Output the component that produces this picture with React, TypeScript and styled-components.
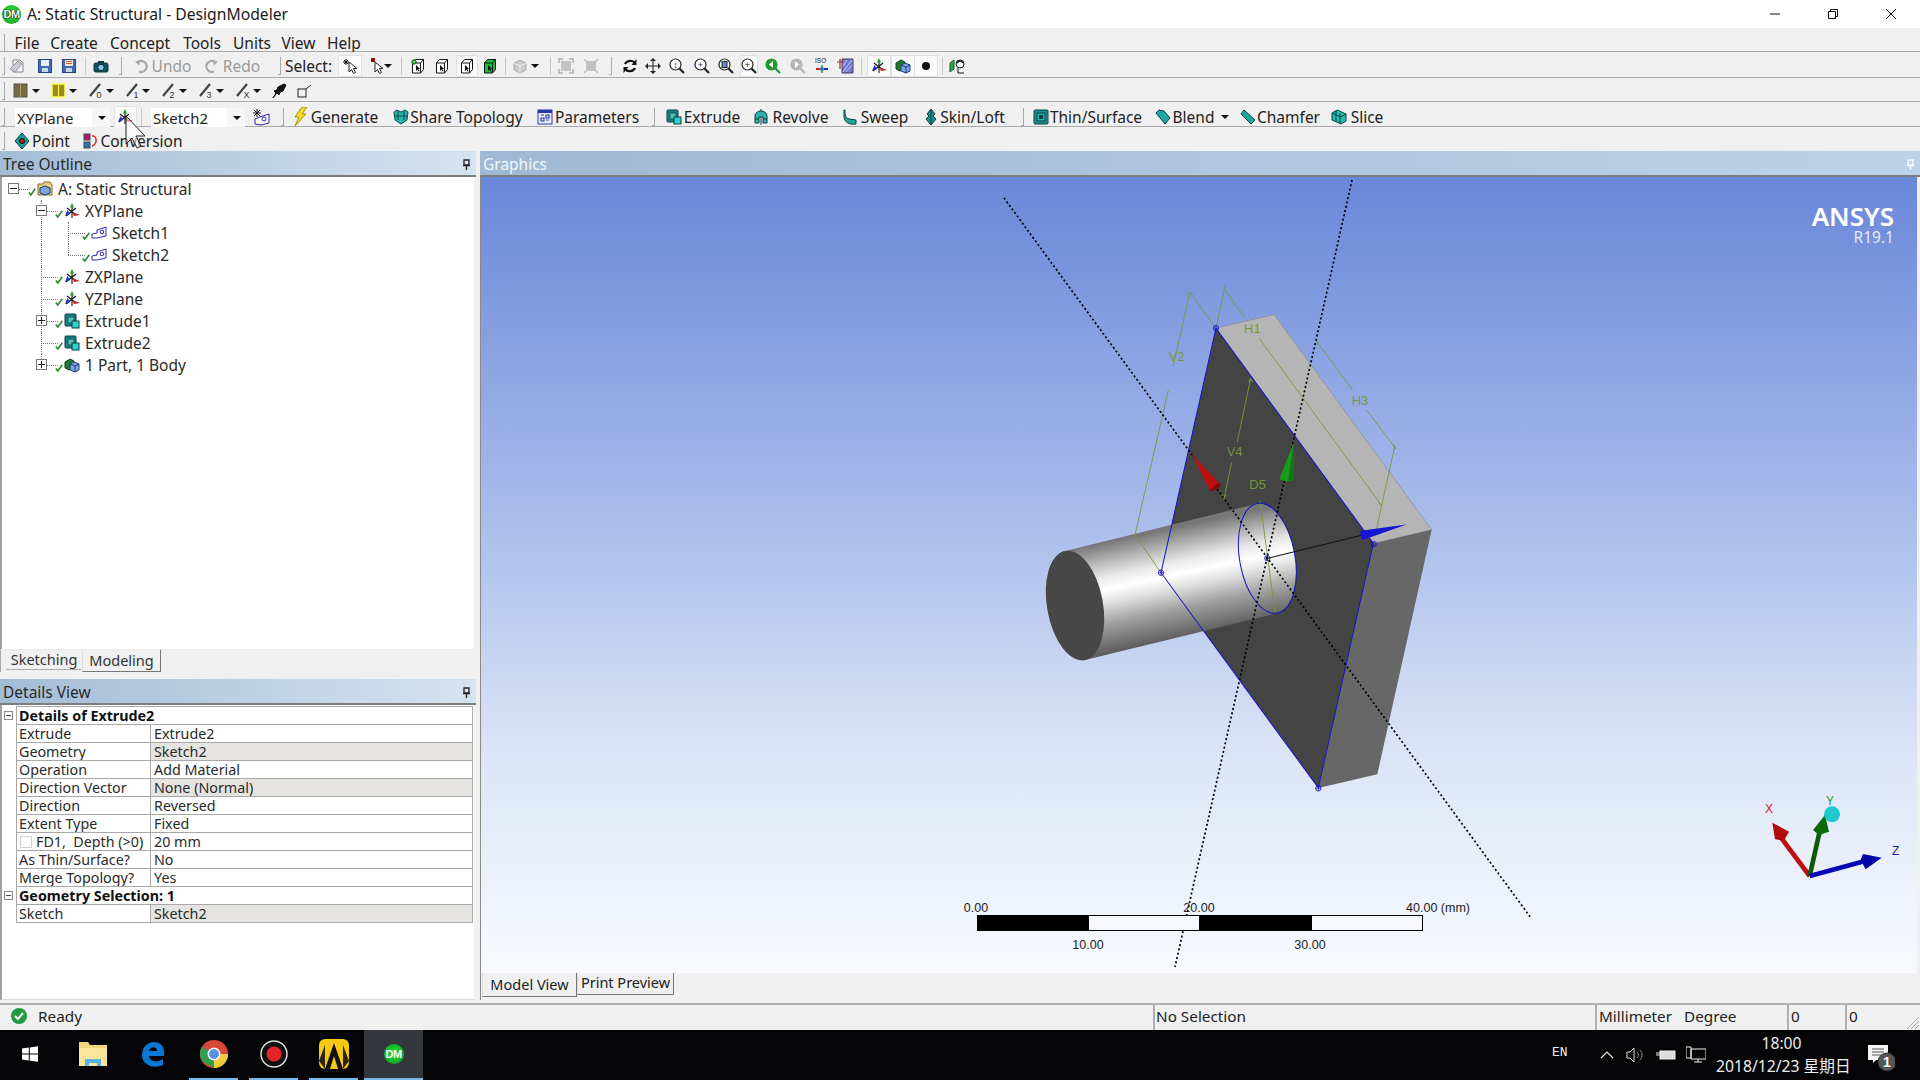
import React from 'react';
import styled, { createGlobalStyle } from 'styled-components';

const Global = createGlobalStyle`
  html, body { margin: 0; padding: 0; background: #f0f0f0; }
  * { box-sizing: border-box; }
`;
const FONT = `"Noto Sans", "Noto Sans CJK SC", sans-serif`;

const Page = styled.div`
  width: 1920px; height: 1080px; overflow: hidden; position: relative;
  display: flex; flex-direction: column; background: #f0f0f0;
  font-family: ${FONT}; font-size: 14.5px; color: #222;
`;
const TitleBar = styled.div`
  height: 28px; background: #fff; display: flex; align-items: center; flex: none;
`;
const TitleLogo = styled.div`
  width: 19px; height: 19px; margin-left: 2px; border-radius: 50%; flex: none;
  background: radial-gradient(circle at 50% 40%, #3fe23f, #0c9a1c);
  color: #fff; font: bold 11px/19px "Liberation Sans", sans-serif; text-align: center;
  text-shadow: 0 0 1px #000, 0 0 1px #000, 0 0 1px #000; letter-spacing: -0.5px;
`;
const TitleText = styled.div`
  margin-left: 6px; font-size: 15.7px; color: #1a1a1a; flex: 1; white-space: nowrap;
`;
const WinBtn = styled.div`
  width: 58px; height: 28px; display: flex; align-items: center; justify-content: center; flex: none;
`;
const Band = styled.div<{ $h: number; $line?: boolean; $top?: number }>`
  height: ${p => p.$h}px; flex: none; display: flex; align-items: center;
  padding-top: ${p => p.$top ?? 0}px;
  border-bottom: ${p => (p.$line === false ? 'none' : '1px solid #aaa')};
  background: #f0f0f0;
`;
const Slot = styled.div<{ $ml: number; $w: number }>`
  margin-left: ${p => p.$ml}px; width: ${p => p.$w}px; flex: none; display: flex;
  align-items: center; justify-content: center; white-space: nowrap; height: 100%;
`;
const Label = styled.span<{ $muted?: boolean }>`
  font-size: 15.5px; line-height: 1; padding-top: 2px; color: ${p => (p.$muted ? '#9a9a9a' : '#222')};
`;
const Grip = styled.div`
  width: 3px; height: 18px; border-right: 1px solid #a8a8a8; border-bottom: 1px solid #a8a8a8;
`;
const Sep = styled.div`
  width: 1px; height: 18px; background: #c8c8c8;
`;
const Pressed = styled.div`
  width: 100%; height: 22px; background: #fafafa; border: 1px solid #e2e2e2;
  display: flex; align-items: center; justify-content: center;
`;
const Combo = styled.div`
  width: 100%; height: 20px; margin-top: 2px; background: linear-gradient(90deg, #fff 81%, #f6f6f6 81%);
  display: flex; align-items: center; justify-content: space-between; padding: 0 4px 0 2px;
  font-size: 15px;
`;
const Caret = styled.span`
  width: 0; height: 0; border-left: 4px solid transparent; border-right: 4px solid transparent;
  border-top: 4px solid #111; display: inline-block; flex: none;
`;
const Main = styled.div`
  flex: none; height: 852px; display: flex;
`;
const LeftCol = styled.div`
  width: 476px; flex: none; display: flex; flex-direction: column;
`;
const PanelHead = styled.div`
  height: 26px; flex: none; display: flex; align-items: center; justify-content: space-between;
  padding: 2px 5px 0 3px; border-bottom: 2px solid #7d7d7d; font-size: 15.5px; color: #2a2a2a;
  background: linear-gradient(90deg, #a3bcd6, #d6e3f0);
`;
const GraphicsHead = styled(PanelHead)`
  background: linear-gradient(90deg, #9fb9d4, #bcd2e8); color: #f2f6fa;
`;
const TreeBody = styled.div`
  height: 472px; flex: none; background: #fff; border-left: 2px solid #a0a0a0;
  margin-right: 2px; padding-top: 1px;
`;
const TreeRow = styled.div`
  height: 22px; display: flex; align-items: center; margin-left: -2px; font-size: 15.5px; color: #2a2a2a;
`;
const Conn = styled.div<{ $w: number; $v?: 'full' | 'top'; $h?: boolean }>`
  width: ${p => p.$w}px; height: 22px; flex: none; position: relative;
  &::before {
    content: ${p => (p.$v ? '""' : 'none')}; position: absolute; left: ${p => p.$w === 28 ? 14 : 13}px; top: 0;
    height: ${p => (p.$v === 'top' ? 11 : 22)}px; border-left: 1px dotted #777;
  }
  &::after {
    content: ${p => (p.$h ? '""' : 'none')}; position: absolute; left: ${p => p.$w === 28 ? 14 : 13}px; top: 11px;
    width: ${p => p.$w === 28 ? 14 : 17}px; border-top: 1px dotted #777;
  }
`;
const PlusBox = styled.span`
  position: absolute; z-index: 1; left: 50%; top: 5px; margin-left: -6px; width: 11px; height: 11px;
  border: 1px solid #777; background: #fff; display: flex; align-items: center; justify-content: center;
`;
const Check = styled.span`
  width: 8px; flex: none; display: flex; margin-top: 6px;
`;
const TreeIcon = styled.span`
  width: 16px; height: 16px; flex: none; margin: 0 5px 0 1px; display: flex;
`;
const TabStrip = styled.div`
  height: 23px; flex: none; display: flex; align-items: flex-start; padding-left: 5px;
  border-left: 1px solid #a8a8a8; margin-right: 2px; border-top: 1px solid #e8e8e8;
`;
const Tab = styled.div<{ $on?: boolean; $w: number }>`
  width: ${p => p.$w}px; height: ${p => (p.$on ? 22 : 20)}px; margin-top: 0;
  display: flex; align-items: ${p => (p.$on ? 'flex-end' : 'center')}; justify-content: center;
  padding-bottom: ${p => (p.$on ? 1 : 2)}px; font-size: 14.5px; color: #333;
  border-bottom: 1px solid ${p => (p.$on ? '#777' : '#aaa')};
  border-right: 1px solid ${p => (p.$on ? '#777' : 'transparent')};
  border-left: 1px solid ${p => (p.$on ? '#ddd' : 'transparent')};
`;
const Spacer7 = styled.div`
  height: 7px; flex: none;
`;
const DetailsBody = styled.div`
  flex: 1; background: #fff; margin: 0 2px 3px 0; border-left: 2px solid #a0a0a0; padding-top: 1px;
  border-bottom: 1px solid #ddd;
`;
const DRow = styled.div`
  height: 18px; display: flex; font-size: 14.3px; line-height: 17px; color: #2a2a2a; position: relative;
`;
const Gutter = styled.div`
  width: 14px; flex: none; display: flex; align-items: center; justify-content: center; padding-right: 2px;
`;
const MiniBox = styled.span`
  width: 9px; height: 9px; border: 1px solid #888; display: flex; align-items: center; justify-content: center;
  &::after { content: ""; width: 5px; height: 1px; background: #444; }
`;
const Head = styled.div`
  flex: 1; border: 1px solid #a8a8a8; border-bottom: none; font-weight: 700; padding-left: 2px;
  color: #111; font-size: 14.3px; margin-right: 1px;
`;
const KeyCell = styled.div`
  width: 134px; flex: none; border-left: 1px solid #a8a8a8; border-top: 1px solid #a8a8a8;
  padding-left: 2px; white-space: nowrap; display: flex; align-items: center;
`;
const ValCell = styled.div<{ $gray?: boolean }>`
  flex: 1; margin-right: 1px; border-left: 1px solid #a8a8a8; border-top: 1px solid #a8a8a8;
  border-right: 1px solid #a8a8a8;
  padding-left: 3px; background: ${p => (p.$gray ? '#e6e4e0' : '#fff')}; display: flex; align-items: center;
`;
const TableEnd = styled.div`
  height: 1px; margin: 0 1px 0 14px; background: #a8a8a8;
`;
const CheckBox = styled.span`
  width: 12px; height: 12px; border: 1px solid #d0d0d0; margin: 0 4px 0 1px; flex: none;
`;
const Splitter = styled.div`
  width: 4px; flex: none; background: #f0f0f0;
`;
const RightCol = styled.div`
  flex: 1; display: flex; flex-direction: column; min-width: 0;
`;
const CanvasWrap = styled.div`
  height: 796px; flex: none; margin-right: 3px; border-left: 1px solid #8a8a8a; 
  background: linear-gradient(180deg, #6a87d9 0%, #a4b9ea 40%, #dbe4f6 72%, #f8fafe 100%);
  svg { display: block; }
`;
const RightTabs = styled.div`
  height: 27px; flex: none; display: flex; align-items: flex-start; padding-left: 1px;
  border-left: 1px solid #8a8a8a;
`;
const GTab = styled.div<{ $on?: boolean; $w: number }>`
  width: ${p => p.$w}px; height: ${p => (p.$on ? 24 : 22)}px; font-size: 14.5px; color: #222;
  display: flex; align-items: ${p => (p.$on ? 'flex-end' : 'center')}; justify-content: center;
  padding-bottom: ${p => (p.$on ? 2 : 3)}px;
  background: #f0f0f0; border-bottom: 1px solid #777; border-right: 1px solid #777;
  border-left: 1px solid #ddd;
`;
const Status = styled.div`
  height: 27px; flex: none; display: flex; align-items: center; border-top: 2px solid #b0b0b0; font-size: 15.3px; color: #222;
  position: relative;
`;
const StatusPane = styled.div<{ $w: number; $edge?: boolean; $pad?: number }>`
  width: ${p => p.$w}px; flex: none; height: 25px; display: flex; align-items: center;
  padding-left: ${p => p.$pad ?? 2}px; padding-bottom: 3px; white-space: nowrap;
  border-left: ${p => (p.$edge ? '2px solid #b0b0b0' : 'none')};
`;
const Resize = styled.div`
  flex: 1; display: flex; justify-content: flex-end; align-items: flex-end; height: 25px;
`;
const Taskbar = styled.div`
  height: 50px; flex: none; background: #050507; display: flex; align-items: center; position: relative; color: #eee;
`;
const TaskSlot = styled.div<{ $ml: number; $w: number; $active?: boolean; $run?: boolean }>`
  margin-left: ${p => p.$ml}px; width: ${p => p.$w}px; height: 50px; flex: none;
  display: flex; align-items: center; justify-content: center;
  background: ${p => (p.$active ? '#34373b' : 'transparent')};
  border-bottom: 2px solid ${p => (p.$run ? '#76b9ed' : 'transparent')};
`;
const DmBadge = styled.div`
  width: 20px; height: 20px; border-radius: 50%; background: radial-gradient(circle at 50% 45%, #1fdc35, #0a9b20);
  color: #fff; font: bold 11px/20px "Liberation Sans", sans-serif; text-align: center; letter-spacing: -0.5px;
`;
const EnText = styled.div<{ $ml: number }>`
  margin-left: ${p => p.$ml}px; font: 13px "Liberation Mono", monospace; flex: none; width: 15px; color: #eee; margin-top: -6px;
`;
const Clock = styled.div`
  margin-left: 10px; width: 131px; flex: none; text-align: center; color: #eee; font-size: 15.7px; line-height: 23px;
  white-space: nowrap;
`;
const Cursor = styled.svg`
  position: absolute; left: 125px; top: 115px; z-index: 5;
`;

/* ---------- icons ---------- */
type SvgP = { w?: number; h?: number; children: React.ReactNode };
const S = ({ w = 16, h = 16, children }: SvgP) => (
  <svg width={w} height={h} viewBox={`0 0 ${w} ${h}`} fill="none" style={{ display: 'block', flex: 'none' }}>{children}</svg>
);
const NewDoc = () => <S><path d="M4 2h7l3 3v9H4z" fill="#f4f4f4" stroke="#888" /><path d="M1 11L9 3l4 3-7 8z" fill="#c9c9d8" stroke="#999" /></S>;
const Floppy = ({ red }: { red?: boolean }) => <S><rect x="1.5" y="1.5" width="13" height="13" fill="#3f6bb5" stroke="#27457e" /><rect x="4" y="2" width="8" height="6" fill={red ? '#f2e0c8' : '#e8eefc'} />{red && <path d="M5 3.5h6M5 5.5h6" stroke="#d4622a" />}<rect x="5" y="10" width="6" height="4" fill="#c7d4ea" /></S>;
const Camera = () => <S w={18}><rect x="2" y="5" width="14" height="9" rx="1.5" fill="#12505a" stroke="#0d3b44" /><rect x="6" y="3" width="6" height="2" fill="#0d3b44" /><circle cx="9" cy="9.5" r="3.2" fill="#7fc8f5" stroke="#052a30" /></S>;
const Undo = ({ flip }: { flip?: boolean }) => <S><g transform={flip ? 'translate(16 0) scale(-1 1)' : undefined}><path d="M5 4a5.5 5.5 0 1 1 1 9.5" stroke="#a8a8a8" strokeWidth="2.2" /><path d="M2 3.5l5-1-1 5z" fill="#a8a8a8" /></g></S>;
const SelPoint = () => <S w={20} h={18}><path d="M3 5h6M6 2v6M4 3l4 4M8 3L4 7" stroke="#111" /><path d="M9 5v10l2.5-2.5 2 4 2-1-2-4H17z" fill="#fff" stroke="#222" /></S>;
const SelEdge = () => <S w={13} h={18}><rect x="0" y="1" width="4" height="4" fill="#8a1010" /><path d="M4 5v10l2.5-2.5 2 4 2-1-2-4H12z" fill="#fff" stroke="#222" /></S>;
const BoxSel = ({ fill, face }: { fill: string; face?: boolean }) => <S><path d="M2.5 5l3-3.5h8v10l-3 3.5h-8z" fill={fill} stroke="#111" /><path d="M2.5 5h8v10M10.5 5l3-3.5" stroke="#111" />{face && <circle cx="4" cy="4" r="2.2" fill="#4bcf4b" stroke="#0a5a0a" />}<path d="M6 7v6l1.4-1.4 1 2 1-.5-1-2H10z" fill="#111" /></S>;
const GrayCube = () => <S><path d="M2 5l6-3 6 3v7l-6 3-6-3z" fill="#c9c9c9" stroke="#aaa" /><path d="M2 5l6 3 6-3M8 8v7" stroke="#eee" /></S>;
const Frame = ({ x }: { x?: boolean }) => <S><rect x="3" y="3" width="10" height="10" fill="#c5c5c5" />{x ? <path d="M1 1l14 14M15 1L1 15" stroke="#bdbdbd" strokeWidth="1.5" /> : <path d="M1 5V1h4M11 1h4v4M15 11v4h-4M5 15H1v-4" stroke="#b0b0b0" strokeWidth="1.5" />}</S>;
const Rotate = () => <S><path d="M13 5A6 6 0 0 0 3 6" stroke="#111" strokeWidth="2.2" /><path d="M3 11a6 6 0 0 0 10-1" stroke="#111" strokeWidth="2.2" /><path d="M14.5 1v6h-5z M1.5 15V9h5z" fill="#111" /></S>;
const Pan = () => <S><path d="M8 1v14M1 8h14" stroke="#222" /><path d="M8 0l3 3H5zM8 16l3-3H5zM0 8l3-3v6zM16 8l-3-3v6z" fill="#222" /></S>;
const Zoom = ({ inner, ring = '#222', fill = '#fff' }: { inner?: React.ReactNode; ring?: string; fill?: string }) => <S><circle cx="6.5" cy="6.5" r="5.5" fill={fill} stroke={ring} strokeWidth="1.2" /><path d="M10.5 10.5L15 15" stroke={ring} strokeWidth="2.2" />{inner}</S>;
const Iso = () => <S w={18} h={18}><text x="2" y="6" fontSize="6.5" fontFamily="Liberation Sans" fill="#222">ISO</text><path d="M9 8v8" stroke="#2b9a2b" strokeWidth="1.5" /><path d="M3 12h4" stroke="#c22" strokeWidth="2" /><path d="M11 12h4" stroke="#22c" strokeWidth="2" /><circle cx="9" cy="12" r="2" fill="#2b7ab5" /></S>;
const PlaneIcon = () => <S w={18} h={18}><path d="M5 2h11v14H5z" fill="#6d78d8" stroke="#444" /><path d="M6 15L15 3M9 15l6-7M6 9l4-6" stroke="#c4c8f0" /><path d="M3 2v10M0 5h6" stroke="#b02020" strokeWidth="1.2" /></S>;
const Triad = () => <S><path d="M8 3v12M2 13L12 5M3 5l9 7" stroke="#111" strokeWidth="1.1" /><path d="M8 0L5.8 4.5h4.4z" fill="#27a12b" /><path d="M16 12l-6.5-2.5v3.5z" fill="#c81f1f" /><path d="M1 13l2.5-6 2.5 4z" fill="#2030c8" /></S>;
const Cube3 = () => <S><path d="M1 5l5-3 4 2v7l-5 2-4-2z" fill="#1e7b32" stroke="#0c4216" /><path d="M6 7l4-2 5 2v6l-4 2-5-2z" fill="#7ea6e0" stroke="#1f3a7a" /><path d="M6 7l5 2 4-2M11 9v6" stroke="#1f3a7a" /></S>;
const Dot = () => <S w={10} h={10}><circle cx="5" cy="5" r="4" fill="#111" /></S>;
const Person = () => <S w={18}><path d="M1 5l4-3v9l-4 3z" fill="#28a745" stroke="#116624" /><circle cx="11" cy="6" r="4" fill="#fff" stroke="#111" /><path d="M8 5c2-3 5-2 6 0" stroke="#111" strokeWidth="1.5" /><path d="M9 10v5h6" stroke="#111" /></S>;
const Brown = ({ yellow }: { yellow?: boolean }) => <S w={15} h={15}><rect x="1" y="1" width="13" height="13" fill={yellow ? '#9a8a20' : '#7b6a3c'} stroke={yellow ? '#ffff50' : '#555'} strokeWidth={yellow ? 1.5 : 1} /><path d="M7.5 1v13" stroke={yellow ? '#ffff50' : '#a89a70'} /></S>;
const SelNum = ({ n }: { n: string }) => <S w={15} h={18}><path d="M1 14L11 2" stroke="#444" strokeWidth="2.2" /><text x="7.5" y="16" fontSize="9" fontFamily="Liberation Sans" fill="#333">{n}</text></S>;
const Pin = () => <S><path d="M14 2l-3 6-3 1-1 3-2-2-4 5 3-5-2-2 3-1 1-3 6-3z" fill="#111" stroke="#111" /></S>;
const SqLine = () => <S><rect x="2" y="6" width="8" height="8" stroke="#222" /><path d="M10 6l5-4" stroke="#222" /></S>;
const NewSketch = () => <S w={18} h={18}><path d="M2 2l6 6M8 2L2 8M1 5h8M5 1v8" stroke="#111" /><path d="M3 16V11l5-2 9-3v9L9 17z" fill="#fff" stroke="#2727b5" /><circle cx="12" cy="11" r="2" stroke="#2727b5" /></S>;
const Bolt = () => <S w={14} h={20}><path d="M8 0h5L8 7h4L1 19l4-9H1z" fill="#f3e21a" stroke="#a28f0a" /></S>;
const Share = () => <S><path d="M1 3l3-2 4 2 4-2 3 2-1 8-6 4-6-4z" fill="#27b3ad" stroke="#0d4f4c" /><path d="M5 2v9M11 2v9M2 7h12" stroke="#0d4f4c" /></S>;
const Params = () => <S><rect x="1" y="1" width="14" height="14" fill="#eef" stroke="#2338a8" /><rect x="1" y="1" width="14" height="3" fill="#2338a8" /><path d="M4 6h3M4 9h3v3H4zM9 6h3v3H9zM9 11h3" stroke="#2338a8" strokeWidth="1.2" /></S>;
const Extrude = () => <S><rect x="1" y="1" width="11" height="12" rx="1" fill="#1a7f80" stroke="#0b3f40" /><rect x="4" y="4" width="6" height="6" fill="#9fe" opacity=".5" stroke="#0b3f40" /><rect x="8" y="8" width="7" height="7" fill="#31d0cf" stroke="#0b3f40" /></S>;
const Revolve = () => <S><path d="M8 0v16" stroke="#0b3f40" /><path d="M2 7c0-3 3-5 6-5s6 2 6 5v7h-4V8H6v6H2z" fill="#2db3ad" stroke="#0b3f40" /><path d="M2 10h4M10 10h4" stroke="#0b3f40" /></S>;
const Sweep = () => <S><path d="M3 1c0 5 0 8 4 9l7 1v4c-7 1-12-2-12-8V1z" fill="#21a8a3" stroke="#0b3f40" /></S>;
const Skin = () => <S><path d="M8 0l4 5-2 2 3 3-5 6-5-6 3-3-2-2z" fill="#1c8f8c" stroke="#0b3f40" /><path d="M8 0v16" stroke="#0b3f40" /></S>;
const Thin = () => <S><rect x="1" y="1" width="14" height="14" rx="1" fill="#1a8f8f" stroke="#0b3f40" /><rect x="4" y="4" width="8" height="8" fill="#2db3ad" stroke="#0b3f40" /><rect x="6" y="6" width="4" height="4" fill="#0b3f40" /></S>;
const Blend = () => <S><path d="M1 4l3-3 5 1 6 7-5 6z" fill="#1fa7a2" stroke="#0b3f40" /></S>;
const Chamfer = () => <S><path d="M1 5l3-4 11 10-4 4z" fill="#1fa7a2" stroke="#0b3f40" /></S>;
const Slice = () => <S><path d="M1 4l5-3 9 4v7l-5 3-9-4z" fill="#29bdb7" stroke="#0b3f40" /><path d="M5 2v10M9 4v10M1 4l9 4 5-3" stroke="#0b3f40" /></S>;
const PointI = () => <S><path d="M8 0l7 8-7 8-7-8z" fill="#1d9b97" stroke="#0b3f40" /><circle cx="8" cy="8" r="2.5" fill="#b02020" stroke="#111" /></S>;
const Conv = () => <S><rect x="1" y="1" width="6" height="6" fill="#b01a6a" stroke="#444" /><rect x="1" y="9" width="6" height="6" fill="#2a74b5" stroke="#444" /><path d="M9 3c5-1 6 8 0 10" stroke="#d02020" strokeWidth="1.4" /></S>;
const PinIcon = ({ c = '#222' }: { c?: string }) => <S w={9} h={11}><path d="M2 1h5v5H2zM1 6.5h7M4.5 7v4" stroke={c} strokeWidth="1.3" /></S>;
const CheckMark = () => <S w={8} h={8}><path d="M.8 4.5L2.8 7 7.3 .8" stroke="#2b8a2b" strokeWidth="1.6" /></S>;
const SketchTree = () => <S><path d="M1 13V9l5-1V5l9-3v9l-9 2z" fill="#fff" stroke="#2b2bb5" /><circle cx="11" cy="7" r="1.8" stroke="#2b2bb5" /></S>;
const RootIcon = () => <S><path d="M1 3h5l1-2h6l2 3v10H1z" fill="#e9cf7c" stroke="#7a6a2a" /><path d="M8 5l5 2v5l-5 2-5-2V7z" fill="#7ea6e0" stroke="#1f3a7a" /></S>;

type It = { x: number; w: number; n: React.ReactNode };
const Flow = ({ items }: { items: It[] }) => {
  let pos = 0;
  return <>{items.map((it, i) => {
    const ml = it.x - pos;
    pos = it.x + it.w;
    return <Slot key={i} $ml={ml} $w={it.w}>{it.n}</Slot>;
  })}</>;
};
const C = (x: number, n: React.ReactNode, w = 16): It => ({ x: x - w / 2, w, n });
const T = (x: number, r: number, s: string, muted?: boolean): It => ({ x, w: r - x, n: <Label $muted={muted}>{s}</Label> });
const G = (x: number): It => ({ x, w: 3, n: <Grip /> });
const V = (x: number): It => ({ x, w: 1, n: <Sep /> });
const K = (x: number): It => ({ x: x - 4, w: 8, n: <Caret /> });
const Z = (s: string, col = '#222') => <text x="6.5" y="9.5" fontSize="9" fontFamily="Liberation Sans" textAnchor="middle" fill={col}>{s}</text>;

const row2: It[] = [
  G(2), C(17, <NewDoc />), C(45, <Floppy />), C(69, <Floppy red />), V(85), C(101, <Camera />, 18), G(119),
  C(141, <Undo />), T(153, 190, 'Undo', true), C(212, <Undo flip />), T(222, 261, 'Redo', true), G(278),
  T(284, 333, 'Select:'), C(350, <Pressed><SelPoint /></Pressed>, 24), C(377, <SelEdge />, 13), K(388), V(401),
  C(418, <BoxSel fill="#fff" face />), C(442, <BoxSel fill="#fff" />), C(467, <Pressed><BoxSel fill="#fff" /></Pressed>, 22), C(490, <BoxSel fill="#16c23a" />), V(505),
  C(520, <GrayCube />), K(535), V(550), C(566, <Frame />), C(591, <Frame x />), G(609), C(630, <Rotate />),
  C(653, <Pan />), C(677, <Zoom inner={Z('↕')} />), C(702, <Zoom inner={Z('+')} />), C(726, <Zoom inner={<rect x="4" y="3.5" width="5" height="6" fill="#6c8cd0" stroke="#222" />} />),
  C(749, <Pressed><Zoom inner={Z('+')} /></Pressed>, 18), C(773, <Zoom ring="#1f9a30" fill="#1f9a30" inner={<path d="M8 3L4 6.5 8 10z" fill="#fff" />} />), C(798, <Zoom ring="#b5b5b5" fill="#b5b5b5" inner={<path d="M5 3l4 3.5-4 3.5z" fill="#fff" />} />),
  C(822, <Iso />, 18), C(846, <PlaneIcon />, 18), V(861), C(879, <Pressed><Triad /></Pressed>, 24), C(903, <Pressed><Cube3 /></Pressed>, 24), C(926, <Pressed><Dot /></Pressed>, 24), V(942), C(958, <Person />, 18),
];
const row3: It[] = [
  G(2), C(20, <Brown />, 15), K(36), C(58, <Brown yellow />, 15), K(73),
  C(96, <SelNum n="0" />, 15), K(110), C(133, <SelNum n="1" />, 15), K(146), C(169, <SelNum n="2" />, 15), K(183),
  C(206, <SelNum n="3" />, 15), K(220), C(243, <SelNum n="X" />, 15), K(257), C(280, <Pin />), C(304, <SqLine />),
];
const row4: It[] = [
  G(2), { x: 15, w: 95, n: <Combo>XYPlane<Caret /></Combo> }, C(125, <Pressed><Triad /></Pressed>, 23), V(141),
  { x: 151, w: 94, n: <Combo>Sketch2<Caret /></Combo> }, C(261, <NewSketch />, 18), G(281),
  C(301, <Bolt />, 14), T(311, 378, 'Generate'), C(401, <Share />), T(409, 524, 'Share Topology'), C(545, <Params />), T(557, 637, 'Parameters'),
  G(652), C(674, <Extrude />), T(684, 740, 'Extrude'), C(761, <Revolve />), T(772, 829, 'Revolve'), C(850, <Sweep />), T(860, 909, 'Sweep'), C(931, <Skin />), T(940, 1005, 'Skin/Loft'),
  G(1021), C(1041, <Thin />), T(1051, 1141, 'Thin/Surface'), C(1163, <Blend />), T(1173, 1214, 'Blend'), K(1225), C(1248, <Chamfer />), T(1258, 1319, 'Chamfer'), C(1339, <Slice />), T(1350, 1384, 'Slice'),
];
const row5: It[] = [G(2), C(22, <PointI />), T(33, 69, 'Point'), C(91, <Conv />), T(101, 182, 'Conversion')];

type TR = { lvl: number; box?: '-' | '+'; icon: React.ReactNode; t: string; last?: boolean; lastSub?: boolean };
const BoxGlyph = ({ k }: { k: '-' | '+' }) => <S w={9} h={9}><path d={k === '+' ? 'M1 4.5h7M4.5 1v7' : 'M1 4.5h7'} stroke="#222" /></S>;
const tree: TR[] = [
  { lvl: 0, box: '-', icon: <RootIcon />, t: 'A: Static Structural' },
  { lvl: 1, box: '-', icon: <Triad />, t: 'XYPlane' },
  { lvl: 2, icon: <SketchTree />, t: 'Sketch1' },
  { lvl: 2, icon: <SketchTree />, t: 'Sketch2', lastSub: true },
  { lvl: 1, icon: <Triad />, t: 'ZXPlane' },
  { lvl: 1, icon: <Triad />, t: 'YZPlane' },
  { lvl: 1, box: '+', icon: <Extrude />, t: 'Extrude1' },
  { lvl: 1, icon: <Extrude />, t: 'Extrude2' },
  { lvl: 1, box: '+', icon: <Cube3 />, t: '1 Part, 1 Body', last: true },
];
const TreeLine = ({ r }: { r: TR }) => (
  <TreeRow>
    {r.lvl === 0 && <Conn $w={28} $h><PlusBox><BoxGlyph k={r.box!} /></PlusBox></Conn>}
    {r.lvl === 1 && <><Conn $w={28} /><Conn $w={27} $v={r.last ? 'top' : 'full'} $h>{r.box && <PlusBox><BoxGlyph k={r.box} /></PlusBox>}</Conn></>}
    {r.lvl === 2 && <><Conn $w={28} /><Conn $w={27} $v="full" /><Conn $w={27} $v={r.lastSub ? 'top' : 'full'} $h /></>}
    <Check><CheckMark /></Check>
    <TreeIcon>{r.icon}</TreeIcon>
    {r.t}
  </TreeRow>
);

const rows: [string, string, boolean?][] = [
  ['Extrude', 'Extrude2'], ['Geometry', 'Sketch2', true], ['Operation', 'Add Material'], ['Direction Vector', 'None (Normal)', true],
  ['Direction', 'Reversed'], ['Extent Type', 'Fixed'],
];
const rowsB: [string, string][] = [['As Thin/Surface?', 'No'], ['Merge Topology?', 'Yes']];

const OL = '#76983a';
const MODEL_T = 'translate(1001 280) scale(.33333 .34435)';
const Model = () => (
  <g transform={MODEL_T}>
    <path d="M648 140L822 100L1295 725L1120 765z" fill="#b5b5b5" stroke="#888" strokeWidth="2" />
    <path d="M1120 765L1295 725L1132 1435L955 1475z" fill="#676767" />
    <path d="M648 140L1120 765L955 1475L483 850z" fill="#444" />
    <path d="M193 788L770 650A83 158 -10.7 0 1 830 968L258 1103A83 158 -10.7 0 1 193 788z" fill="url(#cyl)" />
    <ellipse cx="225" cy="945" rx="84" ry="161" transform="rotate(-10.7 225 945)" fill="#474747" />
    <g stroke={OL} strokeWidth="2.6" fill="none">
      <path d="M570 35L648 140M570 35L520 250M505 320L405 740L483 850" />
      <path d="M676 15L650 130M676 30L735 110" />
      <path d="M778 170L1145 655L1125 745M1185 480L1145 655" />
      <path d="M950 178L1058 320M1100 378L1188 490" />
      <path d="M752 285L712 470M695 530L672 635" />
      <path d="M780 640L825 965" />
      <path d="M570 35l-10 12M570 35l6 14M405 740l10 -2M1188 490l-10 -8M950 178l4 12M1145 655l-10 -8M752 285l-6 12M752 285l6 12M672 635l-4 -12M672 635l6 -12" />
    </g>
    <g fill={OL} fontFamily="Liberation Sans" fontSize="39" textAnchor="middle" opacity=".95">
      <text x="530" y="235">V2</text>
      <text x="757" y="153">H1</text>
      <text x="1080" y="362">H3</text>
      <text x="704" y="510">V4</text>
      <text x="773" y="607">D5</text>
    </g>
    <g stroke="#1414c8" strokeWidth="3" fill="none">
      <path d="M648 140L1120 765L955 1475L483 850z" />
      <ellipse cx="802" cy="808" rx="83" ry="162" transform="rotate(-10.7 802 808)" />
      {[[648, 140], [1121, 767], [955, 1476], [483, 850], [802, 808]].map(([x, y], i) => (
        <g key={i}><circle cx={x} cy={y} r="8" strokeWidth="2.5" /><path d={`M${x - 8} ${y}h16M${x} ${y - 8}v16`} strokeWidth="2" /></g>
      ))}
    </g>
    <path d="M805 808L1090 740" stroke="#111" strokeWidth="3" />
  </g>
);
const Cones = () => (
  <g transform={MODEL_T}>
    <path d="M575 505L630 612Q650 610 663 595z" fill="#bb1010" />
    <path d="M630 612Q650 612 663 595Q655 590 650 592z" fill="#7d0a0a" />
    <path d="M880 475L838 578Q858 590 880 580z" fill="#1a9a1a" />
    <path d="M880 475L865 583Q874 583 880 580z" fill="#0f7a12" />
    <path d="M1220 710L1082 728Q1078 745 1088 755z" fill="#1616d0" />
  </g>
);
const GraphicsSvg = () => (
  <svg width={1435} height={796} viewBox="482 177 1435 796">
    <defs>
      <linearGradient id="cyl" gradientUnits="userSpaceOnUse" x1="190" y1="788" x2="255" y2="1103">
        <stop offset="0" stopColor="#777" />
        <stop offset=".12" stopColor="#a6a6a6" />
        <stop offset=".3" stopColor="#e8e8e8" />
        <stop offset=".42" stopColor="#fff" />
        <stop offset=".55" stopColor="#dcdcdc" />
        <stop offset=".72" stopColor="#a2a2a2" />
        <stop offset="1" stopColor="#5a5a5a" />
      </linearGradient>
    </defs>
    <Model />
    <g stroke="#000" strokeWidth="1.7" strokeDasharray="2 2.4">
      <path d="M1005 198L1532 918" />
      <path d="M1353 180L1176 967" />
    </g>
    <Cones />
    <g fill="#fff" textAnchor="end">
      <text x="1895" y="226" fontFamily="Noto Sans" fontWeight="600" fontSize="26">ANSYS</text>
      <text x="1895" y="243" fontFamily="Noto Sans" fontSize="15.5" fillOpacity=".85">R19.1</text>
    </g>
    <g>
      <rect x="978.5" y="915.5" width="445" height="15" fill="#f6f8fd" stroke="#000" />
      <rect x="978" y="915" width="112" height="16" fill="#000" />
      <rect x="1200" y="915" width="113" height="16" fill="#000" />
    </g>
    <g fontFamily="Liberation Sans" fontSize="12.5" fill="#222" textAnchor="middle">
      <text x="977" y="912">0.00</text>
      <text x="1089" y="949">10.00</text>
      <text x="1200" y="912">20.00</text>
      <text x="1311" y="949">30.00</text>
      <text x="1439" y="912">40.00 (mm)</text>
    </g>
    <g transform="translate(1720 780) scale(.33333)">
      <path d="M272 288L180 165" stroke="#c01010" strokeWidth="14" />
      <path d="M160 128L210 155L195 182L168 178z" fill="#b00c0c" />
      <path d="M272 288L303 150" stroke="#0a5a0a" strokeWidth="14" />
      <path d="M318 105L330 155L300 165L282 150z" fill="#0a6a0a" />
      <path d="M272 288L430 245" stroke="#0707b8" strokeWidth="14" />
      <path d="M488 233L440 268L425 240L432 222z" fill="#0505a8" />
      <circle cx="339" cy="103" r="24" fill="#20c8d0" />
      <g fontFamily="Liberation Sans" fontSize="36" textAnchor="middle">
        <text x="150" y="100" fill="#d02040">X</text>
        <text x="333" y="76" fill="#20a040">Y</text>
        <text x="530" y="224" fill="#2020c0">Z</text>
      </g>
    </g>
  </svg>
);

const WinLogo = () => <S w={18} h={18}><path d="M1 3.5l6.8-1V8.6H1zM8.8 2.4L17 1.2v7.4H8.8zM1 9.6h6.8v6L1 14.6zM8.8 9.6H17v7.2l-8.2-1.1z" fill="#fff" /></S>;
const Folder = () => <S w={28} h={26}><path d="M0 1h9l2 3h17v21H0z" fill="#f4d479" /><path d="M0 7h28v18H0z" fill="#fbe59a" /><path d="M6 25v-7h16v7h-4v-3h-8v3z" fill="#57b4e8" /></S>;
const Edge = () => <S w={24} h={26}><path d="M1 14C1 6 7 1 13 1c7 0 11 5 10 14H8c1 6 9 7 14 3v6c-8 4-21 1-21-10zM8 10h8c0-5-7-5-8 0z" fill="#0a78d4" /></S>;
const Chrome = () => <S w={28} h={28}><circle cx="14" cy="14" r="14" fill="#d8483a" /><path d="M14 14L1.9 21A14 14 0 0 1 2 6.8z" fill="#2f9e4e" /><path d="M14 14h14a14 14 0 0 1-14 14L1.9 21z" fill="#2f9e4e" /><path d="M14 14h14a14 14 0 0 1-14 14z" fill="#f6c93d" /><circle cx="14" cy="14" r="6.5" fill="#fff" /><circle cx="14" cy="14" r="5" fill="#5b8fe0" /></S>;
const Rec = () => <S w={28} h={28}><circle cx="14" cy="14" r="13" fill="#111" stroke="#ddd" strokeWidth="1.5" /><circle cx="14" cy="14" r="7.5" fill="#e8232a" /></S>;
const Yellow = () => <S w={30} h={30}><rect width="30" height="30" rx="6" fill="#f6c913" /><path d="M15 4L6 30h5l4-13 4 13h5z" fill="#111" /><path d="M0 22L6 6v24zM30 22L24 6v24z" fill="#2a2410" /></S>;
const Win = ({ k }: { k: 'min' | 'max' | 'x' }) => <S w={12} h={12}>
  {k === 'min' && <path d="M1 6h10" stroke="#111" />}
  {k === 'max' && <path d="M1.5 3.5h7v7h-7zM3.5 3.5v-2h7v7h-2" stroke="#111" />}
  {k === 'x' && <path d="M1 1l10 10M11 1L1 11" stroke="#111" />}
</S>;

export default function App() {
  return (
    <Page>
      <Global />
      <TitleBar>
        <TitleLogo>DM</TitleLogo>
        <TitleText>A: Static Structural - DesignModeler</TitleText>
        <WinBtn><Win k="min" /></WinBtn><WinBtn><Win k="max" /></WinBtn><WinBtn><Win k="x" /></WinBtn>
      </TitleBar>
      <Band $h={24} $top={7}><Flow items={[G(2), T(15, 39, 'File'), T(50, 98, 'Create'), T(109, 171, 'Concept'), T(182, 222, 'Tools'), T(234, 270, 'Units'), T(281, 316, 'View'), T(327, 361, 'Help')]} /></Band>
      <Band $h={26} $top={2}><Flow items={row2} /></Band>
      <Band $h={24} $top={2}><Flow items={row3} /></Band>
      <Band $h={25} $top={5}><Flow items={row4} /></Band>
      <Band $h={24} $top={3} $line={false}><Flow items={row5} /></Band>
      <Main>
        <LeftCol>
          <PanelHead>Tree Outline<PinIcon /></PanelHead>
          <TreeBody>{tree.map((r, i) => <TreeLine key={i} r={r} />)}</TreeBody>
          <TabStrip><Tab $w={76}>Sketching</Tab><Tab $on $w={79}>Modeling</Tab></TabStrip>
          <Spacer7 />
          <PanelHead>Details View<PinIcon /></PanelHead>
          <DetailsBody>
            <DRow><Gutter><MiniBox /></Gutter><Head>Details of Extrude2</Head></DRow>
            {rows.map(([k, v, g]) => <DRow key={k}><Gutter /><KeyCell>{k}</KeyCell><ValCell $gray={g}>{v}</ValCell></DRow>)}
            <DRow><Gutter /><KeyCell><CheckBox />FD1,&nbsp; Depth (&gt;0)</KeyCell><ValCell>20 mm</ValCell></DRow>
            {rowsB.map(([k, v]) => <DRow key={k}><Gutter /><KeyCell>{k}</KeyCell><ValCell>{v}</ValCell></DRow>)}
            <DRow><Gutter><MiniBox /></Gutter><Head>Geometry Selection: 1</Head></DRow>
            <DRow><Gutter /><KeyCell>Sketch</KeyCell><ValCell $gray>Sketch2</ValCell></DRow>
            <TableEnd />
          </DetailsBody>
        </LeftCol>
        <Splitter />
        <RightCol>
          <GraphicsHead>Graphics<PinIcon c="#fff" /></GraphicsHead>
          <CanvasWrap><GraphicsSvg /></CanvasWrap>
          <RightTabs><GTab $on $w={95}>Model View</GTab><GTab $w={97}>Print Preview</GTab></RightTabs>
        </RightCol>
      </Main>
      <Status>
        <StatusPane $w={38} $pad={10}><S w={18} h={18}><circle cx="9" cy="9" r="8" fill="#1f9a3e" /><path d="M5 9l3 3 5-6" stroke="#fff" strokeWidth="2" /></S></StatusPane>
        <StatusPane $w={1115} $pad={0}>Ready</StatusPane>
        <StatusPane $w={442} $pad={1} $edge>No Selection</StatusPane>
        <StatusPane $w={89} $edge>Millimeter</StatusPane>
        <StatusPane $w={103} $pad={0}>Degree</StatusPane>
        <StatusPane $w={58} $edge>0</StatusPane>
        <StatusPane $w={55} $edge>0</StatusPane>
        <Resize><S w={14} h={14}><path d="M13 1L1 13M13 5L5 13M13 9l-4 4" stroke="#aaa" /></S></Resize>
      </Status>
      <Taskbar>
        <TaskSlot $ml={5} $w={50}><WinLogo /></TaskSlot>
        <TaskSlot $ml={13} $w={50}><Folder /></TaskSlot>
        <TaskSlot $ml={10} $w={50}><Edge /></TaskSlot>
        <TaskSlot $ml={11} $w={49} $run><Chrome /></TaskSlot>
        <TaskSlot $ml={11} $w={49} $run><Rec /></TaskSlot>
        <TaskSlot $ml={11} $w={49} $run><Yellow /></TaskSlot>
        <TaskSlot $ml={6} $w={59} $active $run><DmBadge>DM</DmBadge></TaskSlot>
        <EnText $ml={1129}>EN</EnText>
        <Slot $ml={33} $w={14}><S w={14} h={10}><path d="M1 8l6-6 6 6" stroke="#eee" strokeWidth="1.2" /></S></Slot>
        <Slot $ml={11} $w={20}><S w={20} h={18}><path d="M2 6h3l4-4v14l-4-4H2z" stroke="#ddd" /><path d="M12 6a4 4 0 0 1 0 6M15 4a7 7 0 0 1 0 10" stroke="#888" /></S></Slot>
        <Slot $ml={11} $w={20}><S w={20} h={12}><rect x="4" y="2" width="15" height="8" stroke="#eee" fill="#ddd" /><path d="M0 6h4M1 3v2M3 3v2" stroke="#eee" /></S></Slot>
        <Slot $ml={10} $w={20}><S w={20} h={18}><path d="M0 1h5v11H0zM5 3h15v10H5zM8 16h8M12 13v3" stroke="#eee" /></S></Slot>
        <Clock>18:00<br />2018/12/23 星期日</Clock>
        <Slot $ml={20} $w={28}>
          <S w={28} h={32}><path d="M1 6h20v15H9l-3 3v-3H1z" fill="#f4f4f4" /><path d="M5 10h12M5 13h12M5 16h12" stroke="#555" /><circle cx="20" cy="23" r="9" fill="#555" stroke="#333" /><text x="20" y="28" fontSize="14" fontWeight="700" textAnchor="middle" fill="#fff" fontFamily="Liberation Sans">1</text></S>
        </Slot>
      </Taskbar>
      <Cursor width={22} height={34} viewBox="0 0 22 34"><path d="M1 1v28l6-6 5 10 4-2-5-10h9z" fill="rgba(255,255,255,.55)" stroke="#222" /></Cursor>
    </Page>
  );
}
